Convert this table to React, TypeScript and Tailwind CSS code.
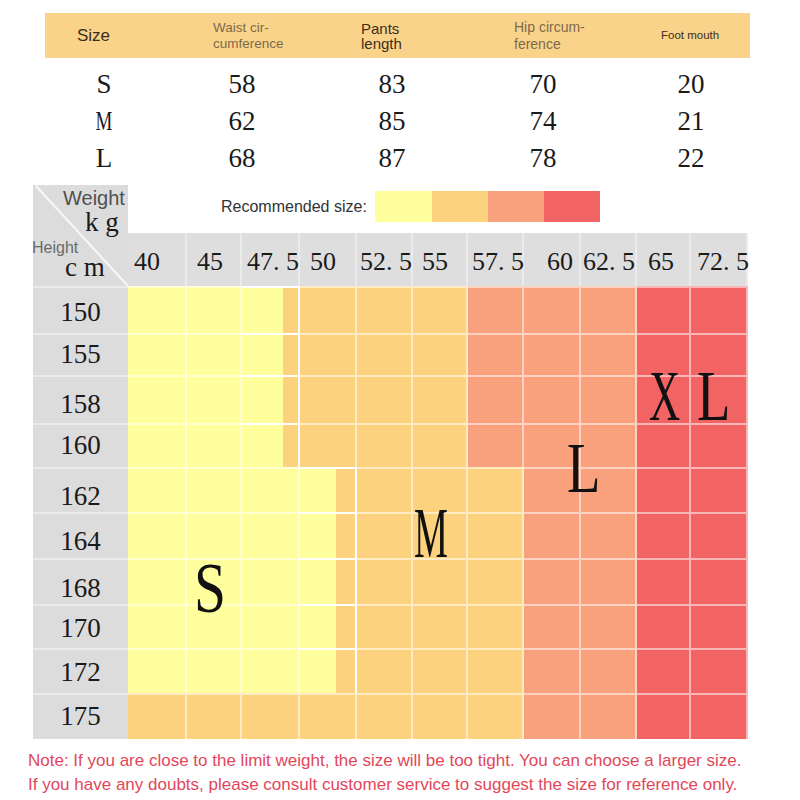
const Y = "bg-[#ffff9e]";
const O = "bg-[#fdd27f]";
const S = "bg-[#f9a07d]";
const R = "bg-[#f26464]";

// width of each weight column, left to right
const colW = [
  "w-[59px]", "w-[55px]", "w-[58px]", "w-[57px]", "w-[56px]", "w-[55px]",
  "w-[56px]", "w-[57px]", "w-[56px]", "w-[54px]", "w-[57px]",
];

const weights = [
  { label: "40", pad: "pl-[6px]" },
  { label: "45", pad: "pl-[10px]" },
  { label: "47. 5", pad: "pl-[5px]" },
  { label: "50", pad: "pl-[10px]" },
  { label: "52. 5", pad: "pl-[3px]" },
  { label: "55", pad: "pl-[9px]" },
  { label: "57. 5", pad: "pl-[4px]" },
  { label: "60", pad: "pl-[23px]" },
  { label: "62. 5", pad: "pl-[2px]" },
  { label: "65", pad: "pl-[11px]" },
  { label: "72. 5", pad: "pl-[6px]" },
];

// split = yellow part width then orange
type Cell = string | { split: string };
const rowA: Cell[] = [Y, Y, { split: "w-[41px]" }, O, O, O, S, S, S, R, R];
const rowB: Cell[] = [Y, Y, Y, { split: "w-[36px]" }, O, O, O, S, S, R, R];
const rowC: Cell[] = [O, O, O, O, O, O, O, S, S, R, R];

const heights = [
  { cm: "150", h: "h-[47px]", nudge: "translate-y-[2px]", cells: rowA },
  { cm: "155", h: "h-[42px]", nudge: "translate-y-[-1px]", cells: rowA },
  { cm: "158", h: "h-[48px]", nudge: "translate-y-[4px]", cells: rowA },
  { cm: "160", h: "h-[44px]", nudge: "translate-y-[-1px]", cells: rowA },
  { cm: "162", h: "h-[45px]", nudge: "translate-y-[6px]", cells: rowB },
  { cm: "164", h: "h-[46px]", nudge: "translate-y-[5px]", cells: rowB },
  { cm: "168", h: "h-[46px]", nudge: "translate-y-[6px]", cells: rowB },
  { cm: "170", h: "h-[44px]", nudge: "translate-y-[1px]", cells: rowB },
  { cm: "172", h: "h-[45px]", nudge: "translate-y-[1px]", cells: rowB },
  { cm: "175", h: "h-[46px]", nudge: "translate-y-[-1px]", cells: rowC },
];

const sizes = [
  { size: "S", vals: ["58", "83", "70", "20"], h: "h-[38px]" },
  { size: "M", vals: ["62", "85", "74", "21"], h: "h-[37px]" },
  { size: "L", vals: ["68", "87", "78", "22"], h: "h-[36px]" },
];

const serif = "font-['Liberation_Serif',serif]";
const sans = "font-['Liberation_Sans',sans-serif]";

function SizeTable() {
  return (
    <div>
      <div
        className={`ml-[45px] mt-[13px] w-[705px] h-[45px] bg-[#fad38a] grid grid-cols-[168px_148px_153px_147px_89px] items-center ${sans}`}
      >
        <div className="pl-[32px] text-[17px] text-[#3a2d1a]">Size</div>
        <div className="text-[13.5px] leading-[16px] text-[#7d6a4c]">
          Waist cir-
          <br />
          cumference
        </div>
        <div className="text-[15px] leading-[15px] text-[#3a2d1a]">
          Pants
          <br />
          length
        </div>
        <div className="text-[14px] leading-[17px] text-[#7d6a4c]">
          Hip circum-
          <br />
          ference
        </div>
        <div className="text-[11.5px] text-[#3a2d1a]">Foot mouth</div>
      </div>
      <div className={`mt-[7px] ${serif} text-[27px] leading-none text-[#1a1a1a]`}>
        {sizes.map((r) => (
          <div
            key={r.size}
            className={`${r.h} pl-[54px] grid grid-cols-[138px_150px_151px_148px_100px] items-center`}
          >
            <div className="w-[100px] text-center">
              <span className={r.size === "M" ? "inline-block scale-x-[0.7]" : ""}>
                {r.size}
              </span>
            </div>
            {r.vals.map((v, i) => (
              <div key={i} className="w-[100px] text-center">
                {v}
              </div>
            ))}
          </div>
        ))}
      </div>
    </div>
  );
}

function Corner() {
  return (
    <div className="relative w-[95px] h-[101px] bg-[#dcdcdc] shrink-0">
      <svg className="absolute inset-0" width="95" height="101">
        <line x1="3" y1="1" x2="95" y2="101" stroke="#f8f8f8" strokeWidth="2" />
      </svg>
      <span className={`absolute left-[30px] top-[3px] text-[20px] leading-[20px] text-[#505050] ${sans}`}>
        Weight
      </span>
      <span className={`absolute left-[52px] top-[24px] text-[27px] leading-none text-[#1a1a1a] ${serif}`}>
        k g
      </span>
      <span className={`absolute left-[-1px] top-[55px] text-[16px] leading-none text-[#6a6a6a] ${sans}`}>
        Height
      </span>
      <span className={`absolute left-[32px] top-[71px] text-[27px] leading-[22px] text-[#1a1a1a] ${serif}`}>
        c m
      </span>
    </div>
  );
}

function Legend() {
  return (
    <div className="h-[48px] flex items-start">
      <div className={`ml-[93px] mt-[13px] text-[16px] leading-[18px] text-[#333] ${sans}`}>
        Recommended size:
      </div>
      <div className="ml-[8px] mt-[6px] flex h-[31px]">
        <div className="w-[57px] bg-[#ffff9e]" />
        <div className="w-[56px] bg-[#fdd27f]" />
        <div className="w-[56px] bg-[#f9a07d]" />
        <div className="w-[56px] bg-[#f26464]" />
      </div>
    </div>
  );
}

function BigLetter({ ch, cls }: { ch: string; cls: string }) {
  return (
    <span
      className={`absolute inline-block origin-left text-[72px] leading-none text-[#111] ${serif} ${cls}`}
    >
      {ch}
    </span>
  );
}

function Chart() {
  return (
    <div className="ml-[33px] mt-[9px] w-[715px]">
      <div className="flex">
        <Corner />
        <div className="w-[620px]">
          <Legend />
          <div className={`flex h-[53px] ${serif} text-[26px] leading-none text-[#1a1a1a]`}>
            {weights.map((w, i) => (
              <div
                key={w.label}
                className={`${colW[i]} ${w.pad} pt-[4px] flex items-center bg-[#dedede] border-r-2 border-[#ebebeb] whitespace-pre`}
              >
                {w.label}
              </div>
            ))}
          </div>
        </div>
      </div>
      <div className="relative">
        {heights.map((row) => (
          <div key={row.cm} className={`flex ${row.h}`}>
            <div
              className={`w-[95px] shrink-0 flex items-center justify-center bg-[#dcdcdc] border-t-2 border-[#ebebeb] ${serif} text-[27px] leading-none text-[#1a1a1a]`}
            >
              <span className={row.nudge}>{row.cm}</span>
            </div>
            {row.cells.map((c, i) =>
              typeof c === "string" ? (
                <div
                  key={i}
                  className={`${colW[i]} ${c} border-r-2 border-t-2 border-[#ffffff88]`}
                />
              ) : (
                <div
                  key={i}
                  className={`${colW[i]} flex border-r-2 border-t-2 border-[#ffffff88]`}
                >
                  <div className={`${c.split} ${Y}`} />
                  <div className={`flex-1 ${O}`} />
                </div>
              )
            )}
          </div>
        ))}
        <BigLetter ch="S" cls="left-[161px] top-[266px] scale-x-[0.8]" />
        <BigLetter ch="M" cls="left-[381px] top-[211px] scale-x-[0.53]" />
        <BigLetter ch="L" cls="left-[534px] top-[146px] scale-x-[0.76]" />
        <BigLetter ch="X" cls="left-[616px] top-[74px] scale-x-[0.6]" />
        <BigLetter ch="L" cls="left-[664px] top-[74px] scale-x-[0.76]" />
      </div>
    </div>
  );
}

export default function App() {
  return (
    <div className="w-[800px] h-[800px] bg-white overflow-hidden">
      <SizeTable />
      <Chart />
      <div className={`mt-[10px] pl-[28px] text-[17px] leading-[24px] text-[#e2475a] ${sans}`}>
        <p>
          Note: If you are close to the limit weight, the size will be too tight. You can choose a larger size.
        </p>
        <p>
          If you have any doubts, please consult customer service to suggest the size for reference only.
        </p>
      </div>
    </div>
  );
}
